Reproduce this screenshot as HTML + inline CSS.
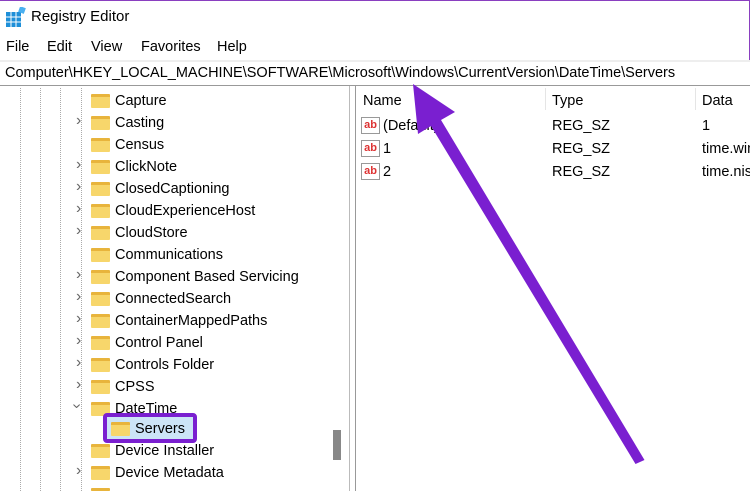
<!DOCTYPE html>
<html><head><style>
body{margin:0;width:750px;height:491px;overflow:hidden;background:#fff;font-family:"Liberation Sans",sans-serif;color:#000;position:relative}
.a{position:absolute;white-space:nowrap}
.t{font-size:14.5px}
.f{position:absolute;width:19px;height:14px;background:#f7d66b;border-top:3px solid #e8b43c;box-sizing:border-box;border-radius:1px}
.ch{position:absolute;font-size:16px;color:#666}
.m{position:absolute;top:39px;font-size:14.5px}
</style></head><body>
<div class="a" style="left:0;top:0;width:750px;height:1px;background:#8a3fc0"></div>
<div class="a" style="left:749px;top:0;width:1px;height:62px;background:#8a3fc0"></div>
<svg class="a" style="left:6px;top:7px" width="20" height="20"><rect x="0" y="5" width="15" height="15" fill="#1e8fd8"/><path d="M5 5V20M10 5V20M0 10H15M0 15H15" stroke="#fff" stroke-width="1"/><rect x="13" y="0" width="6" height="6" fill="#4ab0f0" transform="rotate(20 16 3)"/></svg>
<div class="a" style="left:31px;top:8px;font-size:15px">Registry Editor</div>
<div class="m" style="left:6px">File</div><div class="m" style="left:47px">Edit</div><div class="m" style="left:91px">View</div><div class="m" style="left:141px">Favorites</div><div class="m" style="left:217px">Help</div>
<div class="a" style="left:0;top:60px;width:750px;height:2px;background:#eee"></div>
<div class="a" style="left:5px;top:65px;font-size:14.5px">Computer\HKEY_LOCAL_MACHINE\SOFTWARE\Microsoft\Windows\CurrentVersion\DateTime\Servers</div>
<div class="a" style="left:0;top:85px;width:750px;height:1px;background:#999"></div>
<div class="a" style="left:349px;top:86px;width:1px;height:405px;background:#bbb"></div>
<div class="a" style="left:355px;top:86px;width:1px;height:405px;background:#999"></div>
<div class="a" style="left:333px;top:430px;width:8px;height:30px;background:#888"></div>
<div class="a" style="left:20px;top:88px;height:403px;border-left:1px dotted #aaa"></div>
<div class="a" style="left:40px;top:88px;height:403px;border-left:1px dotted #aaa"></div>
<div class="a" style="left:60px;top:88px;height:403px;border-left:1px dotted #aaa"></div>
<div class="a" style="left:81px;top:88px;height:403px;border-left:1px dotted #aaa"></div>
<div id="tree" style="position:absolute;left:0;top:0;width:350px;height:491px;overflow:hidden"></div>
<script>
var items=["Capture","Casting","Census","ClickNote","ClosedCaptioning","CloudExperienceHost","CloudStore","Communications","Component Based Servicing","ConnectedSearch","ContainerMappedPaths","Control Panel","Controls Folder","CPSS","DateTime"];
var exp=[0,1,0,1,1,1,1,0,1,1,1,1,1,1,2];
var h="";
for(var i=0;i<items.length;i++){var y=93+i*22;
h+='<div class="f" style="left:91px;top:'+(y+1)+'px"></div><div class="a t" style="left:115px;top:'+y+'px">'+items[i]+'</div>';
if(exp[i]==1)h+='<div class="ch" style="left:76px;top:'+(y-3)+'px">&#x203A;</div>';
if(exp[i]==2)h+='<div class="ch" style="left:74px;top:'+(y-4)+'px;transform:rotate(90deg)">&#x203A;</div>';}
h+='<div class="a" style="left:103px;top:413px;width:94px;height:30px;border:4px solid #7a1fd0;border-radius:4px;box-sizing:border-box;background:#cce4f7"></div>';
h+='<div class="f" style="left:111px;top:422px"></div><div class="a t" style="left:135px;top:421px">Servers</div>';
h+='<div class="f" style="left:91px;top:444px"></div><div class="a t" style="left:115px;top:443px">Device Installer</div>';
h+='<div class="f" style="left:91px;top:466px"></div><div class="a t" style="left:115px;top:465px">Device Metadata</div><div class="ch" style="left:76px;top:462px">&#x203A;</div>';
h+='<div class="f" style="left:91px;top:488px;height:3px"></div>';
document.getElementById("tree").innerHTML=h;
</script>
<div id="rp" style="position:absolute;left:356px;top:86px;width:394px;height:405px;overflow:hidden">
<div class="a t" style="left:7px;top:7px">Name</div>
<div class="a" style="left:189px;top:2px;width:1px;height:22px;background:#e5e5e5"></div>
<div class="a t" style="left:196px;top:7px">Type</div>
<div class="a" style="left:339px;top:2px;width:1px;height:22px;background:#e5e5e5"></div>
<div class="a t" style="left:346px;top:7px">Data</div>
<div id="rows"></div>
</div>
<script>
var r=[["(Default)","1"],["1","time.windows.com"],["2","time.nist.gov"]],s="";
for(var i=0;i<3;i++){var y=32+i*23;
s+='<div class="a" style="left:5px;top:'+(y-1)+'px;width:19px;height:17px;border:1px solid #999;box-sizing:border-box;font-size:11px;font-weight:bold;color:#d33;line-height:14px;text-align:center;background:#fff">ab</div>';
s+='<div class="a t" style="left:27px;top:'+y+'px">'+r[i][0]+'</div><div class="a t" style="left:196px;top:'+y+'px">REG_SZ</div><div class="a t" style="left:346px;top:'+y+'px">'+r[i][1]+'</div>';}
document.getElementById("rows").innerHTML=s;
</script>
<svg class="a" style="left:0;top:0" width="750" height="491"><polygon points="413,84 455,112 441,120 644.5,460 635.5,464 431,126 418,134" fill="#7a1fd0"/></svg>
</body></html>
